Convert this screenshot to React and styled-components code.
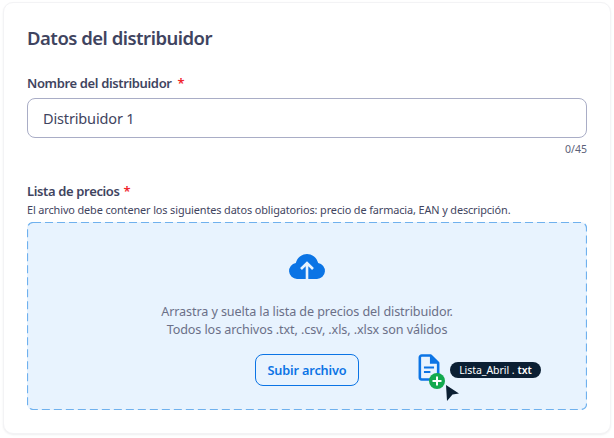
import React from 'react';
import styled, { createGlobalStyle } from 'styled-components';

const Global = createGlobalStyle`
  html, body { margin: 0; padding: 0; background: #ffffff; }
  body { font-family: "Noto Sans", "Liberation Sans", sans-serif; }
`;
const Page = styled.div`
  width: 614px; height: 438px; box-sizing: border-box; padding: 2px 3px 4px; overflow: hidden;
`;
const Card = styled.section`
  box-sizing: border-box; height: 432px; padding: 23px 23px 24px; background: #fff;
  border-radius: 10px; border: 1px solid #f3f3f5; box-shadow: 0 1px 2px rgba(40,45,70,.08);
`;
const Title = styled.h2`
  margin: 0; font-size: 18.5px; line-height: 24px; font-weight: 600; color: #3f4460; letter-spacing: -0.5px;
`;
const FieldLabel = styled.label`
  display: block; font-size: 13px; line-height: 18px; font-weight: 600; color: #3f4460; letter-spacing: -0.36px;
`;
const NameLabel = styled(FieldLabel)`margin-top: 24px;`;
const PriceLabel = styled(FieldLabel)`margin-top: 26px;`;
const Star = styled.span`color: #f0262b; margin-left: ${p => p.$gap}px;`;
const Input = styled.input`
  display: block; box-sizing: border-box; width: 100%; height: 40px; margin-top: 6px; padding: 0 15px;
  border: 1px solid #a9adc6; border-radius: 8px; outline: none; background: #fff;
  font: 400 14.5px "Noto Sans", sans-serif; color: #3f4460; letter-spacing: -0.15px;
`;
const Counter = styled.div`
  margin-top: 4px; text-align: right; font-size: 10.5px; line-height: 14px; color: #5b6078;
`;
const Hint = styled.p`
  margin: 3px 0 0; font-size: 10.9px; line-height: 14px; color: #3f4460; letter-spacing: -0.12px;
`;
const Drop = styled.div`
  position: relative; box-sizing: border-box; height: 188px; margin-top: 5px; display: flex; flex-direction: column;
  align-items: center; padding-top: 30px; background: #e8f3fe; border-radius: 6px;
`;
const DashFrame = styled.svg`position: absolute; inset: 0; width: 100%; height: 100%; pointer-events: none;`;
const CloudIcon = styled.svg`width: 38px; height: 30px; display: block; color: #0b74e5;`;
const DropText = styled.p`
  margin: 21px 0 0; text-align: center; font-size: 12.6px; line-height: 18px; color: #6b7088; letter-spacing: -0.1px;
`;
const Button = styled.button`
  margin-top: 15px; width: 104px; height: 32px; padding: 0; box-sizing: border-box; background: transparent;
  border: 1px solid #0b74e5; border-radius: 8px; color: #0b74e5;
  font: 600 12.7px "Noto Sans", sans-serif; letter-spacing: -0.15px;
`;
const DragGhost = styled.div`
  position: absolute; left: 390px; top: 130px; width: 130px; height: 50px;
`;
const FileIcon = styled.svg`position: absolute; left: 1px; top: 1px; width: 22px; height: 29px;`;
const PlusBadge = styled.svg`position: absolute; left: 12px; top: 21px; width: 16px; height: 16px;`;
const Pill = styled.span`
  position: absolute; left: 33px; top: 10px; height: 16px; width: 91px; box-sizing: border-box;
  display: flex; align-items: center; justify-content: center; border-radius: 8px; background: #0b1f33;
  color: #fff; font-size: 10.5px; letter-spacing: -0.05px; white-space: nowrap;
`;
const Ext = styled.span`font-weight: 600; margin-left: 3px;`;
const Cursor = styled.svg`position: absolute; left: 29px; top: 33px; width: 13px; height: 16px;`;

export default function App() {
  return (
    <Page>
      <Global />
      <Card>
        <Title>Datos del distribuidor</Title>
        <NameLabel>Nombre del distribuidor <Star $gap={3}>*</Star></NameLabel>
        <Input defaultValue="Distribuidor 1" />
        <Counter>0/45</Counter>
        <PriceLabel>Lista de precios <Star $gap={1}>*</Star></PriceLabel>
        <Hint>El archivo debe contener los siguientes datos obligatorios: precio de farmacia, EAN y descripción.</Hint>
        <Drop>
          <DashFrame>
            <rect x="0.5" y="0.5" width="559" height="187" rx="5.5" fill="none" stroke="#6fb1ee" strokeWidth="1.2" strokeDasharray="8 4" />
          </DashFrame>
          <CloudIcon viewBox="0 0 38 30">
            <path fill="currentColor" d="M9 27a8 8 0 0 1-1.2-15.900C9.200 5.600 13.800 2 19 2c5.300 0 9.800 3.600 11.200 9.100A8 8 0 0 1 29 27Z" />
            <path fill="none" stroke="#e8f3fe" strokeWidth="2.600" d="M19 28V11M13 17l6-6 6 6" />
          </CloudIcon>
          <DropText>Arrastra y suelta la lista de precios del distribuidor.<br />Todos los archivos .txt, .csv, .xls, .xlsx son válidos</DropText>
          <Button>Subir archivo</Button>
          <DragGhost>
            <FileIcon viewBox="0 0 24 30">
              <path fill="none" stroke="#0b74e5" strokeWidth="2.800" strokeLinejoin="round" d="M2 4a2 2 0 0 1 2-2h10l8 8v16a2 2 0 0 1-2 2H4a2 2 0 0 1-2-2Z" />
              <path fill="#0b74e5" d="M13 2l9 9h-9Z" />
              <path stroke="#0b74e5" strokeWidth="2.200" d="M6.500 15h11M6.500 20h7" />
            </FileIcon>
            <PlusBadge viewBox="0 0 16 16">
              <circle cx="8" cy="8" r="8" fill="#12a94e" />
              <path stroke="#fff" strokeWidth="2" d="M8 3.500v9M3.500 8h9" />
            </PlusBadge>
            <Pill>Lista_Abril .<Ext>txt</Ext></Pill>
            <Cursor viewBox="0 0 13 16">
              <path fill="#0b1f33" d="M0 0l13 8.500-6.500 1L1 16Z" />
            </Cursor>
          </DragGhost>
        </Drop>
      </Card>
    </Page>
  );
}
